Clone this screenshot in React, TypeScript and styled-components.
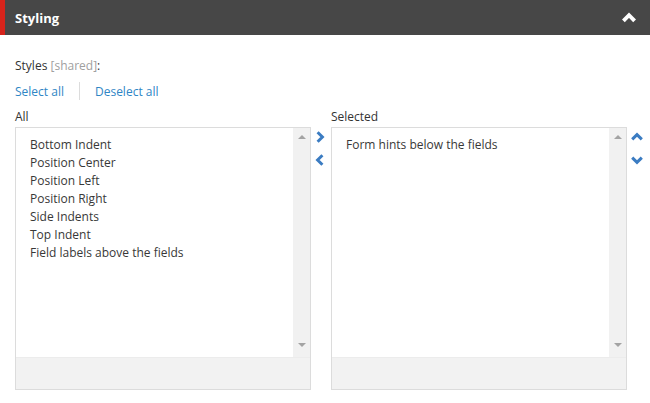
import React from 'react';
import styled, { createGlobalStyle } from 'styled-components';

const GlobalStyle = createGlobalStyle`
  html, body {
    margin: 0;
    padding: 0;
    background: #ffffff;
    font-family: 'Open Sans', 'Liberation Sans', sans-serif;
    font-size: 12px;
    color: #333333;
  }
`;

const allItems = [
  'Bottom Indent',
  'Position Center',
  'Position Left',
  'Position Right',
  'Side Indents',
  'Top Indent',
  'Field labels above the fields',
];

const selectedItems = ['Form hints below the fields'];

type Dir = 'up' | 'down' | 'left' | 'right';

const chevronPoints: Record<Dir, string> = {
  up: '1,7 5,3 9,7',
  down: '1,3 5,7 9,3',
  left: '7,1 3,5 7,9',
  right: '3,1 7,5 3,9',
};

const Chevron = ({ dir, color, size = 12, stroke = 2.5 }: { dir: Dir; color: string; size?: number; stroke?: number }) => (
  <svg width={size} height={size} viewBox="0 0 10 10">
    <polyline points={chevronPoints[dir]} fill="none" stroke={color} strokeWidth={stroke} strokeLinecap="butt" strokeLinejoin="miter" />
  </svg>
);

const ListBox = ({ items }: { items: string[] }) => (
  <Box>
    <BoxMain>
      <Items>
        {items.map((item) => (
          <Item key={item}>{item}</Item>
        ))}
      </Items>
      <ScrollTrack>
        <ScrollArrow dir="up" />
        <ScrollArrow dir="down" />
      </ScrollTrack>
    </BoxMain>
    <BoxFooter />
  </Box>
);

const App = () => {
  return (
    <>
      <GlobalStyle />
      <Panel>
        <Header>
          <Title>Styling</Title>
          <Chevron dir="up" color="#ffffff" size={14} stroke={2.8} />
        </Header>
        <Body>
          <FieldLabel>
            Styles <Muted>[shared]</Muted>:
          </FieldLabel>
          <LinkRow>
            <Link>Select all</Link>
            <Divider />
            <Link>Deselect all</Link>
          </LinkRow>
          <Grid>
            <ColLabel>All</ColLabel>
            <span />
            <ColLabel>Selected</ColLabel>
            <span />
            <ListBox items={allItems} />
            <Buttons>
              <Chevron dir="right" color="#3b7cc2" />
              <Chevron dir="left" color="#3b7cc2" />
            </Buttons>
            <ListBox items={selectedItems} />
            <Buttons>
              <Chevron dir="up" color="#3b7cc2" />
              <Chevron dir="down" color="#3b7cc2" />
            </Buttons>
          </Grid>
        </Body>
      </Panel>
    </>
  );
};

export default App;

const Panel = styled.div`
  width: 650px;
`;

const Header = styled.div`
  height: 35px;
  display: flex;
  align-items: center;
  justify-content: space-between;
  background: #474747;
  border-left: 5px solid #d6231b;
  padding: 0 14px 0 10px;
  box-sizing: border-box;
`;

const Title = styled.div`
  color: #ffffff;
  font-weight: 700;
  font-size: 13px;
`;

const Body = styled.div`
  padding: 22px 0 0 15px;
`;

const FieldLabel = styled.div`
  line-height: 17px;
`;

const Muted = styled.span`
  color: #a0a0a0;
`;

const LinkRow = styled.div`
  display: flex;
  align-items: center;
  height: 20px;
  margin-top: 7px;
`;

const Link = styled.a`
  color: #2f86c5;
  cursor: pointer;
`;

const Divider = styled.span`
  width: 1px;
  height: 18px;
  background: #dcdcdc;
  margin: 0 15px 0 15px;
`;

const Grid = styled.div`
  display: grid;
  grid-template-columns: 296px 20px 296px 23px;
  margin-top: 8px;
`;

const ColLabel = styled.div`
  line-height: 16px;
  color: #333333;
  margin-bottom: 2px;
`;

const Box = styled.div`
  height: 263px;
  border: 1px solid #dcdcdc;
  box-sizing: border-box;
  display: flex;
  flex-direction: column;
`;

const BoxMain = styled.div`
  flex: 1;
  display: flex;
  background: #ffffff;
  border-bottom: 1px solid #ececec;
`;

const Items = styled.div`
  flex: 1;
  padding: 8px 0 0 14px;
`;

const Item = styled.div`
  line-height: 18px;
  color: #383838;
`;

const ScrollTrack = styled.div`
  width: 17px;
  background: #f1f1f1;
  display: flex;
  flex-direction: column;
  justify-content: space-between;
  align-items: center;
  padding: 7px 0 10px;
`;

const ScrollArrow = styled.span<{ dir: 'up' | 'down' }>`
  width: 0;
  height: 0;
  border-left: 4px solid transparent;
  border-right: 4px solid transparent;
  ${({ dir }) => (dir === 'up' ? 'border-bottom: 4px solid #a3a3a3;' : 'border-top: 4px solid #a3a3a3;')}
`;

const BoxFooter = styled.div`
  height: 31px;
  background: #f2f2f2;
`;

const Buttons = styled.div`
  display: flex;
  flex-direction: column;
  align-items: center;
  gap: 11px;
  padding-top: 4px;
  padding-right: 3px;
`;
